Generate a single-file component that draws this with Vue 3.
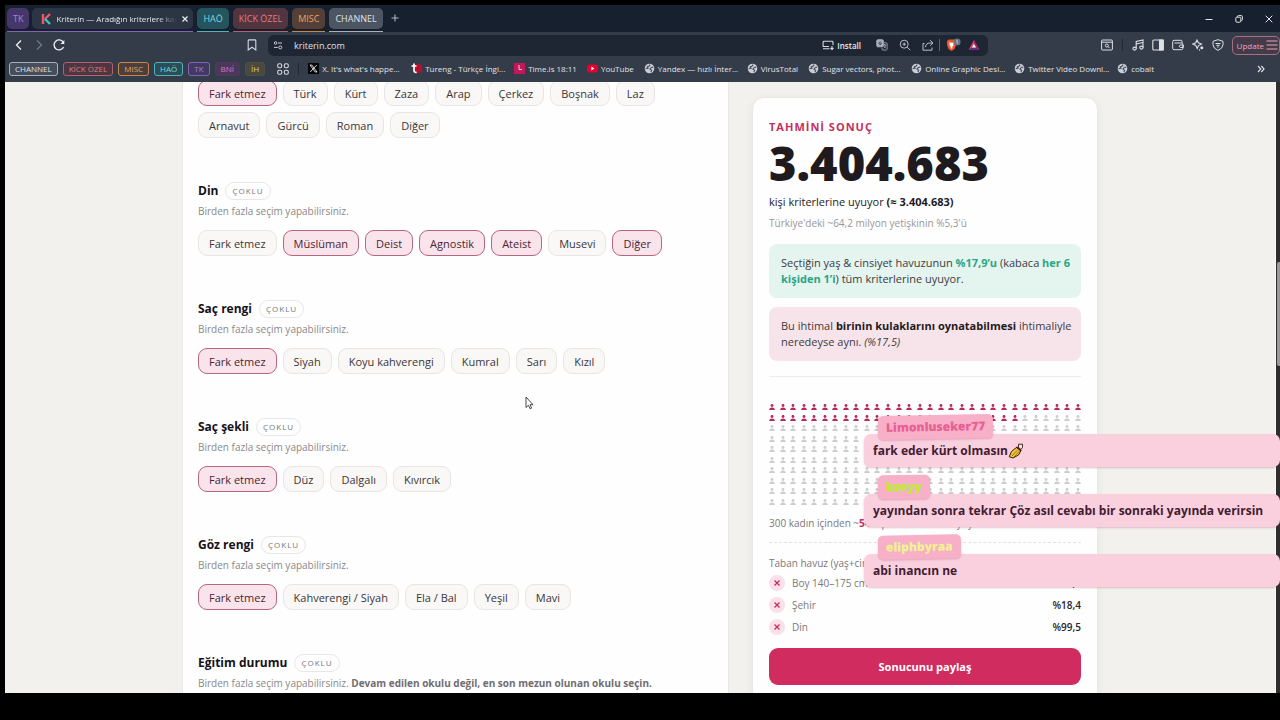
<script setup>
import { ref } from 'vue'

const tabGroups = [
  { name: 'HAÖ', tone: 'teal' },
  { name: 'KİCK ÖZEL', tone: 'red' },
  { name: 'MISC', tone: 'orange' },
  { name: 'CHANNEL', tone: 'gray' }
]

const savedGroups = [
  { name: 'CHANNEL', tone: 'gray' },
  { name: 'KİCK ÖZEL', tone: 'red' },
  { name: 'MISC', tone: 'orange' },
  { name: 'HAÖ', tone: 'teal' },
  { name: 'TK', tone: 'purple' },
  { name: 'BNİ', tone: 'pink' },
  { name: 'İH', tone: 'yellow' }
]

const bookmarks = [
  { icon: 'x', label: "X. It's what's happe...", long: true },
  { icon: 'tureng', label: 'Tureng - Türkçe İngi...', long: true },
  { icon: 'time', label: 'Time.is 18:11' },
  { icon: 'youtube', label: 'YouTube' },
  { icon: 'globe', label: 'Yandex — hızlı İnter...', long: true },
  { icon: 'globe', label: 'VirusTotal' },
  { icon: 'globe', label: 'Sugar vectors, phot...', long: true },
  { icon: 'globe', label: 'Online Graphic Desi...', long: true },
  { icon: 'globe', label: 'Twitter Video Downl...', long: true },
  { icon: 'globe', label: 'cobalt' }
]

const address = ref('kriterin.com')

const multiHint = 'Birden fazla seçim yapabilirsiniz.'
const sections = ref([
  {
    options: ['Fark etmez', 'Türk', 'Kürt', 'Zaza', 'Arap', 'Çerkez', 'Boşnak', 'Laz', 'Arnavut', 'Gürcü', 'Roman', 'Diğer'],
    picked: ['Fark etmez']
  },
  {
    title: 'Din',
    options: ['Fark etmez', 'Müslüman', 'Deist', 'Agnostik', 'Ateist', 'Musevi', 'Diğer'],
    picked: ['Müslüman', 'Deist', 'Agnostik', 'Ateist', 'Diğer']
  },
  {
    title: 'Saç rengi',
    options: ['Fark etmez', 'Siyah', 'Koyu kahverengi', 'Kumral', 'Sarı', 'Kızıl'],
    picked: ['Fark etmez']
  },
  {
    title: 'Saç şekli',
    options: ['Fark etmez', 'Düz', 'Dalgalı', 'Kıvırcık'],
    picked: ['Fark etmez']
  },
  {
    title: 'Göz rengi',
    options: ['Fark etmez', 'Kahverengi / Siyah', 'Ela / Bal', 'Yeşil', 'Mavi'],
    picked: ['Fark etmez']
  },
  {
    title: 'Eğitim durumu',
    note: 'Devam edilen okulu değil, en son mezun olunan okulu seçin.',
    options: [],
    picked: []
  }
])

function toggle(section, option) {
  const at = section.picked.indexOf(option)
  if (at >= 0) section.picked.splice(at, 1)
  else section.picked.push(option)
}

const matching = 54
const filters = [
  { name: 'Boy 140–175 cm', share: '%97,0' },
  { name: 'Şehir', share: '%18,4' },
  { name: 'Din', share: '%99,5' }
]

const chat = [
  { user: 'Limonluseker77', tone: 'rose', text: 'fark eder kürt olmasın', emote: true },
  { user: 'bzeyy', tone: 'lime', text: 'yayından sonra tekrar Çöz asıl cevabı bir sonraki yayında verirsin' },
  { user: 'eliphbyraa', tone: 'lemon', text: 'abi inancın ne' }
]
</script>

<template>
  <div class="stage">
    <div class="browser">
      <header>
        <div class="tabs">
          <div class="tab-group purple">
            <button class="group-label" type="button">TK</button>
            <div class="tab">
              <svg class="i12" viewBox="0 0 12 12" fill="none" stroke-width="2.4"><path d="M3 1v10" stroke="#f0566a" /><path d="M10 1 5 6" stroke="#f0566a" /><path d="M5 6l5 5" stroke="#3cc3d0" /></svg>
              <span class="tab-title">Kriterin — Aradığın kriterlere kaç</span>
              <button class="bare" type="button" aria-label="Sekmeyi kapat">
                <svg class="i8" viewBox="0 0 8 8" stroke="#e6e9ee" stroke-width="1.3"><path d="M1.5 1.5l5 5M6.5 1.5l-5 5" /></svg>
              </button>
            </div>
          </div>
          <div v-for="g in tabGroups" :key="g.name" class="tab-group" :class="g.tone">
            <button class="group-label" type="button">{{ g.name }}</button>
          </div>
          <button class="bare new-tab" type="button" aria-label="Yeni sekme">
            <svg class="i8" viewBox="0 0 8 8" stroke="#b8bec8" stroke-width="1"><path d="M4 0.5v7M0.5 4h7" /></svg>
          </button>
          <div class="window-controls">
            <button class="bare" type="button" aria-label="Küçült"><svg class="i8" viewBox="0 0 8 8" stroke="#dfe3e9"><path d="M0.5 4.5h7" /></svg></button>
            <button class="bare" type="button" aria-label="Önceki boyut"><svg class="i8" viewBox="0 0 8 8" fill="none" stroke="#dfe3e9"><rect x="0.8" y="2.2" width="5" height="5" rx="1" /><path d="M2.4 2V1.6a1 1 0 0 1 1-1h2.8a1.2 1.2 0 0 1 1.2 1.2v2.8a1 1 0 0 1-1 1" /></svg></button>
            <button class="bare" type="button" aria-label="Kapat"><svg class="i8" viewBox="0 0 8 8" stroke="#dfe3e9"><path d="M0.7 0.7l6.6 6.6M7.3 0.7L0.7 7.3" /></svg></button>
          </div>
        </div>

        <div class="toolbar">
          <div class="nav">
            <button class="bare" type="button" aria-label="Geri"><svg class="i14" viewBox="0 0 14 14" fill="none" stroke="#eef0f4" stroke-width="1.3"><path d="M9 2.5 4.5 7 9 11.5" /></svg></button>
            <button class="bare" type="button" aria-label="İleri"><svg class="i14" viewBox="0 0 14 14" fill="none" stroke="#707888" stroke-width="1.3"><path d="M5 2.5 9.5 7 5 11.5" /></svg></button>
            <button class="bare" type="button" aria-label="Yenile"><svg class="i14" viewBox="0 0 14 14" fill="none" stroke="#eef0f4" stroke-width="1.3"><path d="M11.6 9a5 5 0 1 1-.2-4.600" /><path d="M12.300 2v4H8.500z" fill="#eef0f4" stroke="none" /></svg></button>
          </div>
          <button class="bare bookmark" type="button" aria-label="Yer işareti ekle"><svg class="i12" viewBox="0 0 12 12" fill="none" stroke="#d5d9e0" stroke-width="1.1"><path d="M2.200 1.800q0-.9.9-.9h5.800q.9 0 .9.9V11L6 8.200 2.200 11z" /></svg></button>
          <div class="omnibox">
            <svg class="i10" viewBox="0 0 10 10" fill="none" stroke="#c9ced7" stroke-width="1"><circle cx="2.600" cy="3" r="1.300" /><path d="M5 3h4M1 7.400h3.800" /><circle cx="7.300" cy="7.400" r="1.500" /></svg>
            <input v-model="address" type="text" aria-label="Adres" />
            <button class="bare install" type="button">
              <svg class="i12" viewBox="0 0 12 12" fill="none" stroke="#d5d9e0" stroke-width="1.100"><path d="M11 6V3.200q0-.9-.9-.9H2q-.9 0-.9.9V7.500H7M1 9.800h6.500M10 7v3.500M8.500 9l1.500 1.500L11.500 9" /></svg>Install
            </button>
            <button class="bare" type="button" aria-label="Çevir"><svg class="i12" viewBox="0 0 12 12" fill="none" stroke="#a9b0bb"><rect x="0.800" y="0.800" width="6.500" height="7" rx="1" fill="#a9b0bb" /><path d="M5.300 3.300q-1-.8-1.900.100-.8 1.200.2 2.100 1.200.5 1.800-.8H4.300" stroke="#1e2633" stroke-width=".8" /><path d="M8 3.800h2.200q.9 0 .9.900v5.500q0 .9-.9.900H6.500L5.800 9M7 6h3.200M8.600 5v1M9.800 6q-.3 2-2.200 3M8 7.500l1.800 1.600" stroke-width=".8" /></svg></button>
            <button class="bare" type="button" aria-label="Yakınlaştır"><svg class="i12" viewBox="0 0 12 12" fill="none" stroke="#b9bfc9"><circle cx="5.200" cy="5.200" r="4" /><path d="M8.200 8.200l3 3M5.200 3.500v3.400M3.500 5.200h3.400" /></svg></button>
            <button class="bare" type="button" aria-label="Paylaş"><svg class="i12" viewBox="0 0 12 12" fill="none" stroke="#b9bfc9"><path d="M2.500 4.500H1v6.700h9V8.500M3.500 8.200Q3.800 4 8 4h2.500M8.200 1.200 11 4 8.200 6.700" /></svg></button>
            <span class="rule"></span>
            <button class="bare" type="button" aria-label="Brave Shields">
              <svg class="shield" viewBox="0 0 16 14"><path d="M2.500 2.500 4 1.500h5l1.500 1 .8 1.700-.5 1.200.2 1.500-1.500 4-3 2-3-2L2 6.900l.2-1.500-.5-1.200z" fill="#f1562b" /><path d="M4 4.500l1.500.3 1-.3 1 .3L9 4.500l-.8 2.200.3 1.200-1.500.8.6 1.300-1.100.8-1.100-.8.6-1.300-1.500-.8.3-1.200z" fill="#fff" /><circle cx="12" cy="4" r="3.600" fill="#6c7481" /><path d="M11.500 2.800l.7-.4v3.200" stroke="#d5d9e0" stroke-width=".8" fill="none" /></svg>
            </button>
            <button class="bare" type="button" aria-label="Brave Rewards"><svg class="i12" viewBox="0 0 12 12"><path d="M6 1 0.800 10.500h10.400z" fill="#e8425a" /><path d="M6 1l5.200 9.500L8 8.500 6 4.800z" fill="#9b1f68" /><path d="M0.800 10.500h10.400L8 8.500H4z" fill="#5a2b9a" /><path d="M6 4.800 4 8.500h4z" fill="#fff" /></svg></button>
          </div>
          <div class="tools">
            <button class="bare" type="button" aria-label="Sekme ara"><svg class="i12" viewBox="0 0 12 12" fill="none" stroke="#dde1e7"><rect x="0.600" y="1" width="10.800" height="10" rx="1" /><path d="M.6 3.200h10.800M7 7.500l1.500 1.600" /><circle cx="5.800" cy="6.500" r="1.500" /></svg></button>
            <span class="rule dark"></span>
            <button class="bare" type="button" aria-label="Müzik"><svg class="i12" viewBox="0 0 12 12" fill="none" stroke="#dde1e7" stroke-width="1.100"><path d="M4.200 9.500V2.500L11 1v7.500M4.200 5 11 3.500" /><ellipse cx="2.600" cy="9.600" rx="1.700" ry="1.500" /><ellipse cx="9.400" cy="8.600" rx="1.700" ry="1.500" /></svg></button>
            <button class="bare" type="button" aria-label="Kenar çubuğu"><svg class="i12" viewBox="0 0 12 12" fill="none" stroke="#dde1e7" stroke-width="1.100"><rect x="0.800" y="1" width="10.400" height="10" rx="1" /><path d="M7.500 1h3.700v10H7.500z" fill="#dde1e7" /></svg></button>
            <button class="bare" type="button" aria-label="Cüzdan"><svg class="i12" viewBox="0 0 12 12" fill="none" stroke="#dde1e7"><path d="M10 4V2.200q0-.9-.9-.9H2q-1.300 0-1.300 1.300v6.800q0 1.300 1.300 1.300h7.500q1.300 0 1.300-1.300V5.300Q10.800 4 9.500 4H2.500" /><path d="M11.300 6H8.700q-1.300 0-1.300 1.200t1.300 1.300h2.600z" /></svg></button>
            <button class="bare" type="button" aria-label="Leo"><svg class="i12" viewBox="0 0 12 12" fill="none" stroke="#dde1e7" stroke-width="1.100"><path d="M5 1l1.300 2.700L9.500 5 6.600 6.600 5.200 9.500 3.800 6.400.9 5l2.800-1.200z" /><circle cx="9.800" cy="8.800" r="1.500" fill="#dde1e7" stroke="none" /><circle cx="7.500" cy="11" r=".7" fill="#dde1e7" stroke="none" /></svg></button>
            <button class="bare" type="button" aria-label="VPN"><svg class="i12" viewBox="0 0 12 12" fill="none" stroke="#dde1e7"><path d="M6 .7 11 2.300v3.500Q10.700 9.500 6 11.400 1.300 9.500 1 5.800V2.300z" /><path d="M3.500 4.500h5M4.300 6.300h3.400M5.300 8h1.400" /></svg></button>
            <button class="update" type="button">Update<svg class="i12" viewBox="0 0 12 12" stroke="#eca3bb"><path d="M.5 2h11M.5 6h11M.5 10h11" /></svg></button>
          </div>
        </div>

        <nav class="bookmarks" aria-label="Yer işaretleri">
          <button v-for="g in savedGroups" :key="g.name" class="saved" :class="g.tone" type="button">{{ g.name }}</button>
          <button class="bare apps" type="button" aria-label="Uygulamalar"><svg class="i12" viewBox="0 0 12 12" fill="none" stroke="#d5d9e0" stroke-width="1.100"><rect x=".7" y=".7" width="4" height="4" rx="1.500" /><rect x="7.300" y=".7" width="4" height="4" rx="1.500" /><rect x=".7" y="7.300" width="4" height="4" rx="1.500" /><rect x="7.300" y="7.300" width="4" height="4" rx="1.500" /></svg></button>
          <span class="rule dark"></span>
          <a v-for="b in bookmarks" :key="b.label" class="mark" :class="{ long: b.long }" href="#">
            <svg v-if="b.icon === 'x'" class="i11" viewBox="0 0 11 11"><rect width="11" height="11" fill="#050608" /><path d="M2 2h1.800L9 9H7.200z" fill="none" stroke="#fff" stroke-width=".8" /><path d="M8.800 2 2.200 9" stroke="#fff" stroke-width=".8" /></svg>
            <svg v-else-if="b.icon === 'tureng'" class="i11" viewBox="0 0 11 11"><rect x="3" y="1" width="8" height="9" rx="3" fill="#b3102c" /><path d="M3 .5v7q0 2.300 2.600 1.800M.5 3h5" fill="none" stroke="#fff" stroke-width="1.700" /></svg>
            <svg v-else-if="b.icon === 'time'" class="i11" viewBox="0 0 11 11"><rect width="11" height="11" fill="#c2185b" /><path d="M5 2v4.500h3" fill="none" stroke="#f6c9da" /></svg>
            <svg v-else-if="b.icon === 'youtube'" class="i11" viewBox="0 0 11 11"><rect y="1.500" width="11" height="8" rx="2" fill="#e6002d" /><path d="M4.300 3.500v4l3.200-2z" fill="#fff" /></svg>
            <svg v-else class="i11" viewBox="0 0 11 11"><circle cx="5.500" cy="5.500" r="4.800" fill="#c9ced7" /><path d="M6.200 1.600 5 3.200l-1.600.5L4 5.200l-2.400.4M9.300 4.200 7.300 4.500 6 6.200l1.600 1L7 9.200" fill="none" stroke="#4b5361" stroke-width="1.200" /></svg>
            <span>{{ b.label }}</span>
          </a>
          <button class="bare more" type="button" aria-label="Diğer yer işaretleri"><svg class="i8" viewBox="0 0 8 8" fill="none" stroke="#dfe3e9" stroke-width="1.100"><path d="M1 1l2.800 3L1 7M4.300 1l2.800 3-2.800 3" /></svg></button>
        </nav>
      </header>

      <div class="viewport">
        <main class="page">
          <section class="card criteria">
            <div v-for="(s, i) in sections" :key="i" class="block">
              <template v-if="s.title">
                <h2>{{ s.title }} <span class="badge">ÇOKLU</span></h2>
                <p class="hint">{{ multiHint }} <strong v-if="s.note">{{ s.note }}</strong></p>
              </template>
              <div class="chips">
                <button
                  v-for="o in s.options"
                  :key="o"
                  type="button"
                  class="chip"
                  :class="{ on: s.picked.includes(o) }"
                  :aria-pressed="s.picked.includes(o)"
                  @click="toggle(s, o)"
                >{{ o }}</button>
              </div>
            </div>
          </section>

          <aside class="card result">
            <p class="eyebrow">TAHMİNİ SONUÇ</p>
            <p class="total">3.404.683</p>
            <p class="lead">kişi kriterlerine uyuyor <strong>(≈ 3.404.683)</strong></p>
            <p class="sub">Türkiye'deki ~64,2 milyon yetişkinin %5,3'ü</p>
            <p class="note green">Seçtiğin yaş &amp; cinsiyet havuzunun <strong>%17,9’u</strong> (kabaca <strong>her 6 kişiden 1’i</strong>) tüm kriterlerine uyuyor.</p>
            <p class="note pink">Bu ihtimal <strong>birinin kulaklarını oynatabilmesi</strong> ihtimaliyle neredeyse aynı. <em>(%17,5)</em></p>
            <div class="people">
              <svg v-for="n in 300" :key="n" :class="{ hit: n <= matching }" viewBox="0 0 6 6"><circle cx="3" cy="1.500" r="1.400" /><path d="M.2 6q0-2.600 2.800-2.600T5.800 6z" /></svg>
            </div>
            <p class="caption">300 kadın içinden ~<strong>54</strong>'ü profil kriterine uyuyor</p>
            <div class="pool">
              <p class="base">Taban havuz (yaş+cinsiyet)</p>
              <ul>
                <li v-for="f in filters" :key="f.name">
                  <button class="remove" type="button" :aria-label="f.name + ' kaldır'"><svg class="i8" viewBox="0 0 8 8" stroke="#c22c57" stroke-width="1.200"><path d="M1.500 1.500l5 5M6.500 1.500l-5 5" /></svg></button>
                  <span>{{ f.name }}</span>
                  <strong>{{ f.share }}</strong>
                </li>
              </ul>
            </div>
            <button class="share" type="button">Sonucunu paylaş</button>
          </aside>
        </main>
        <div class="scrollbar"><span class="thumb"></span></div>
      </div>
    </div>

    <div class="chat">
      <article v-for="m in chat" :key="m.user" class="message">
        <span class="user" :class="m.tone">{{ m.user }}</span>
        <p class="bubble">{{ m.text }}<svg v-if="m.emote" class="emote" viewBox="0 0 16 16"><path d="M1.200 13.800 3.500 8.500 9 4l4 3.500-2.500 4.500L5 15z" fill="#f4c531" stroke="#33210f" /><path d="M3.800 13.200l5.500-6M6 14l5.500-6" stroke="#8a5a10" stroke-width=".8" /><path d="M10.500 4.500V1.200h4v3.300l-1.500 2z" fill="#f3dfe8" stroke="#33210f" stroke-width=".9" /><path d="M8.500 4.200l4.700 3.600" stroke="#4a1a1a" stroke-width="1.500" /></svg></p>
      </article>
    </div>

    <svg class="pointer" viewBox="0 0 9 14"><path d="M1 1v10.500l2.400-2.200 1.700 3.500 1.500-.7-1.600-3.400H8z" fill="#fff" stroke="#333" stroke-width=".9" /></svg>
  </div>
</template>

<style>
body {
  background: #000;
}
</style>

<style scoped>
.stage {
  position: relative;
  box-sizing: border-box;
  height: 100vh;
  padding: 5px 0 27px 5px;
  overflow: hidden;
  background: #000;
  color: #1f1a1e;
  font-family: "Open Sans", "Noto Sans", sans-serif;
  font-size: 11px;
}
.stage *, .stage *::before { box-sizing: border-box; }
p, h2, ul { margin: 0; padding: 0; }
svg { display: block; flex: none; }
button { font-family: inherit; cursor: pointer; }
.browser { display: flex; flex-direction: column; height: 100%; }
.bare { display: flex; align-items: center; padding: 0; border: 0; background: none; color: inherit; }
.i8 { width: 8px; height: 8px; }
.i10 { width: 10px; height: 10px; }
.i11 { width: 11px; height: 11px; }
.i12 { width: 12px; height: 12px; }
.i14 { width: 14px; height: 14px; }
.rule { width: 1px; height: 12px; background: #5c6472; }
.rule.dark { background: #1f2734; }

header { flex: none; background: #343c4a; color: #e6e9ee; }
.gray { --c: #dfe3e8; --b: #4c5561; --line: #a9b0ba; }
.red { --c: #e07a85; --b: #53353f; --line: #b5606c; }
.orange { --c: #eda35e; --b: #544038; --line: #c98749; }
.teal { --c: #74dbe0; --b: #25545e; --line: #4fb3bb; }
.purple { --c: #a783dd; --b: #46376a; --line: #8562b8; }
.pink { --c: #e56fc0; --b: #54365f; --line: #54365f; }
.yellow { --c: #e3cf58; --b: #50503f; --line: #50503f; }

.tabs { display: flex; align-items: stretch; gap: 4px; height: 27px; padding: 3px 7px 0 2px; background: #17202e; }
.tab-group { display: flex; gap: 3px; height: 24px; padding-bottom: 2px; border-bottom: 1px solid var(--line); }
.group-label { height: 21px; padding: 0 6px; border: 0; border-radius: 5px; background: var(--b); color: var(--c); font-size: 9px; font-weight: 500; white-space: nowrap; }
.tab { display: flex; align-items: center; gap: 4px; width: 161px; height: 21px; padding: 0 4px 0 8px; border-radius: 5px; background: #2c3543; }
.tab-title { flex: 1; overflow: hidden; font-size: 8px; white-space: nowrap; mask-image: linear-gradient(90deg, #000 84%, transparent); }
.new-tab { margin: 0 0 4px 4px; }
.window-controls { display: flex; gap: 22px; margin: 0 0 3px auto; }

.toolbar { display: flex; align-items: center; height: 26px; }
.nav { display: flex; gap: 6px; padding-left: 7px; }
.bookmark { margin-left: 180px; }
.omnibox { display: flex; align-items: center; gap: 11px; flex: 0 1 720px; height: 21px; margin-left: 10px; padding: 0 8px 0 5px; border-radius: 6px; background: #1e2633; }
.omnibox input { flex: 1; min-width: 40px; padding: 0; border: 0; outline: 0; background: none; color: #dde1e7; font: 9px "Open Sans", "Noto Sans", sans-serif; }
.install { gap: 3px; margin-right: 4px; font-size: 8px; font-weight: 600; }
.omnibox .rule { margin: 0 -6px; }
.shield { width: 16px; height: 14px; margin-right: -4px; }
.tools { display: flex; align-items: center; gap: 8px; margin-left: auto; }
.tools .rule { margin: 0 1px; }
.update { display: flex; align-items: center; gap: 2px; height: 19px; padding: 0 1px 0 4px; border: 1px solid #a76f85; border-radius: 5px; background: #443b49; color: #eca3bb; font-size: 8px; }

.bookmarks { display: flex; align-items: center; height: 24px; padding: 0 15px 3px 4px; font-size: 8px; }
.saved { height: 14px; margin-right: 5px; padding: 0 5px; border: 1px solid var(--line); border-radius: 3px; background: color-mix(in srgb, var(--b) 70%, #343c4a); color: var(--c); font-size: 8px; font-weight: 500; line-height: 12px; white-space: nowrap; }
.apps { margin: 0 9px 0 7px; }
.bookmarks .rule { margin-right: 9px; }
.mark { display: flex; align-items: center; gap: 3px; margin-right: 10px; color: #e0e3e8; text-decoration: none; white-space: nowrap; }
.mark.long { width: 93px; }
.more { margin-left: auto; }

.viewport { display: flex; flex: 1; min-height: 0; overflow: hidden; background: #f2f1ed; }
.page { display: grid; grid-template-columns: minmax(0, 1fr) 346px; align-items: start; gap: 23px; flex: 1; max-width: 916px; margin: 0 auto; }
.scrollbar { width: 5px; padding: 180px 0 0 1px; border-left: 1px solid #fafafa; background: #2e2e2e; }
.thumb { display: block; height: 104px; border-radius: 2px 0 0 2px; background: #9a9a9a; }
.card { background: #fefefe; border: 1px solid #eae8e5; }
.criteria { margin-top: -2px; padding: 0 15px 40px; border-width: 0 1px; }
.block { margin-bottom: 44px; }
h2 { display: flex; align-items: center; gap: 7px; height: 18px; font-size: 12px; line-height: 18px; font-weight: 700; color: #16121a; }
.badge { padding: 0 6px; border: 1px solid #e9e7e5; border-radius: 9px; color: #777; font-size: 8px; line-height: 16px; font-weight: 500; letter-spacing: 1px; }
.hint { margin: 3px 0 11px; color: #8b888b; font-size: 10px; line-height: 16px; }
.hint strong { color: #716d71; }
.chips { display: flex; flex-wrap: wrap; gap: 6px; }
.chip { height: 26px; padding: 0 10px; border: 1px solid #e8e6e2; border-radius: 9px; background: #f9f8f6; color: #3a3639; font-size: 11px; }
.chip.on { border-color: #b8667f; background: #fae4eb; color: #4a2433; }

.result { margin-top: 15px; padding: 20px 16px 30px; border-radius: 12px; box-shadow: 0 2px 8px rgba(60, 50, 40, 0.06); }
.eyebrow { color: #c5305e; font-size: 11px; line-height: 18px; font-weight: 700; letter-spacing: 1px; }
.total { font-family: "Noto Sans", "Open Sans", sans-serif; font-size: 47px; line-height: 55px; font-weight: 900; }
.lead { font-size: 11px; line-height: 22px; }
.sub { color: #9a979a; font-size: 10px; line-height: 20px; }
.note { margin-top: 11px; padding: 11px 4px 11px 12px; border-radius: 8px; color: #403b3f; font-size: 11px; line-height: 16px; }
.note + .note { margin-top: 9px; }
.green { background: #e4f4ef; }
.green strong { color: #2aa684; }
.note.pink { background: #f7e4ea; }
.note.pink strong { color: #241a20; }
.people { display: grid; grid-template-columns: repeat(30, 6px); justify-content: space-between; align-content: space-between; height: 138px; margin-top: 15px; padding: 27px 0 9px; border-top: 1px solid #eeecec; }
.people svg { width: 6px; height: 6px; fill: #cfcccd; }
.people .hit { fill: #b5285a; }
.caption { padding-bottom: 10px; color: #7c787b; font-size: 10px; line-height: 18px; }
.caption strong { color: #c5305e; }
.pool { padding-top: 11px; border-top: 1px dashed #e4e1e1; color: #7c787b; font-size: 10px; }
.base { line-height: 18px; }
ul { list-style: none; }
li { display: flex; align-items: center; gap: 7px; height: 22px; }
li strong { margin-left: auto; color: #29242a; font-weight: 600; }
.remove { display: flex; align-items: center; justify-content: center; width: 16px; height: 16px; padding: 0; border: 0; border-radius: 50%; background: #fae0e8; }
.share { display: block; width: 100%; height: 37px; margin-top: 10px; border: 0; border-radius: 9px; background: #d02c5f; color: #fff; font-size: 11px; font-weight: 700; }

.chat { position: absolute; top: 415px; right: 0; display: grid; gap: 8px; width: 416px; font-weight: 700; }
.message { display: flex; flex-direction: column; align-items: flex-start; }
.user { z-index: 1; height: 24px; margin: 0 0 -5px 14px; padding: 0 8px; border-radius: 5px; background: #f8afc8; box-shadow: 0 1px 2px rgba(160, 70, 100, 0.3); font-size: 12px; line-height: 23px; font-weight: 800; transform: rotate(-1deg); }
.rose { color: #e85f92; }
.lime { color: #b8f02c; }
.lemon { color: #f1f291; }
.bubble { display: flex; align-items: center; width: 100%; height: 33px; padding: 0 9px; border-radius: 7px; background: #fad0df; box-shadow: 0 1px 2px rgba(160, 70, 100, 0.3); color: #421c31; font-size: 12px; white-space: nowrap; }
.emote { width: 16px; height: 16px; }
.pointer { position: absolute; top: 396px; left: 525px; width: 9px; height: 14px; }
</style>
